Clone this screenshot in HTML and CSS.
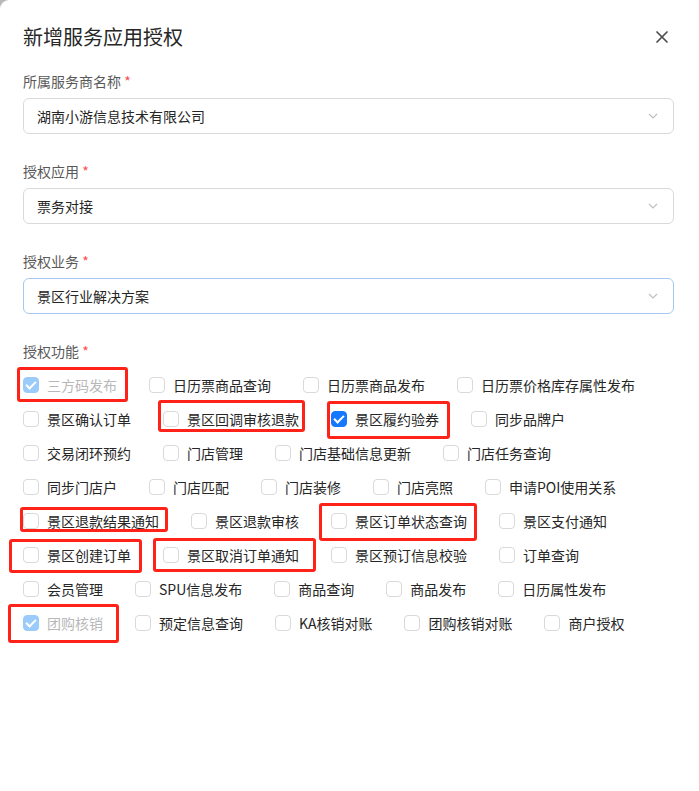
FILE: index.html
```html
<!DOCTYPE html>
<html lang="zh-CN">
<head>
    <meta charset="UTF-8">
    <meta name="viewport" content="width=device-width, initial-scale=1.0">
    <title>新增服务应用授权</title>
    <link rel="stylesheet" href="styles.css">
</head>
<body>
    <div class="modal">
        <div class="modal-head">
            <div class="modal-title">新增服务应用授权</div>
            <span class="close">
                <svg width="12" height="12" viewBox="0 0 12 12"><path d="M1 1 L11 11 M11 1 L1 11" stroke="#4d4d4d" stroke-width="1.7" stroke-linecap="round"/></svg>
            </span>
        </div>

        <div class="field">
            <div class="label">所属服务商名称 <span class="req">*</span></div>
            <div class="select">
                <span>湖南小游信息技术有限公司</span>
                <svg class="arrow" width="10" height="6" viewBox="0 0 10 6"><path d="M1 1 L5 5 L9 1" fill="none" stroke="#bfbfbf" stroke-width="1.2"/></svg>
            </div>
        </div>

        <div class="field">
            <div class="label">授权应用 <span class="req">*</span></div>
            <div class="select">
                <span>票务对接</span>
                <svg class="arrow" width="10" height="6" viewBox="0 0 10 6"><path d="M1 1 L5 5 L9 1" fill="none" stroke="#bfbfbf" stroke-width="1.2"/></svg>
            </div>
        </div>

        <div class="field">
            <div class="label">授权业务 <span class="req">*</span></div>
            <div class="select focus">
                <span>景区行业解决方案</span>
                <svg class="arrow" width="10" height="6" viewBox="0 0 10 6"><path d="M1 1 L5 5 L9 1" fill="none" stroke="#bfbfbf" stroke-width="1.2"/></svg>
            </div>
        </div>

        <div class="label">授权功能 <span class="req">*</span></div>
        <div class="group">
            <div class="row">
                <label class="cb disabled checked"><i></i>三方码发布</label>
                <label class="cb"><i></i>日历票商品查询</label>
                <label class="cb"><i></i>日历票商品发布</label>
                <label class="cb"><i></i>日历票价格库存属性发布</label>
            </div>
            <div class="row">
                <label class="cb"><i></i>景区确认订单</label>
                <label class="cb"><i></i>景区回调审核退款</label>
                <label class="cb checked"><i></i>景区履约验券</label>
                <label class="cb"><i></i>同步品牌户</label>
            </div>
            <div class="row">
                <label class="cb"><i></i>交易闭环预约</label>
                <label class="cb"><i></i>门店管理</label>
                <label class="cb"><i></i>门店基础信息更新</label>
                <label class="cb"><i></i>门店任务查询</label>
            </div>
            <div class="row">
                <label class="cb"><i></i>同步门店户</label>
                <label class="cb"><i></i>门店匹配</label>
                <label class="cb"><i></i>门店装修</label>
                <label class="cb"><i></i>门店亮照</label>
                <label class="cb"><i></i>申请POI使用关系</label>
            </div>
            <div class="row">
                <label class="cb"><i></i>景区退款结果通知</label>
                <label class="cb"><i></i>景区退款审核</label>
                <label class="cb"><i></i>景区订单状态查询</label>
                <label class="cb"><i></i>景区支付通知</label>
            </div>
            <div class="row">
                <label class="cb"><i></i>景区创建订单</label>
                <label class="cb"><i></i>景区取消订单通知</label>
                <label class="cb"><i></i>景区预订信息校验</label>
                <label class="cb"><i></i>订单查询</label>
            </div>
            <div class="row">
                <label class="cb"><i></i>会员管理</label>
                <label class="cb"><i></i>SPU信息发布</label>
                <label class="cb"><i></i>商品查询</label>
                <label class="cb"><i></i>商品发布</label>
                <label class="cb"><i></i>日历属性发布</label>
            </div>
            <div class="row">
                <label class="cb disabled checked"><i></i>团购核销</label>
                <label class="cb"><i></i>预定信息查询</label>
                <label class="cb"><i></i>KA核销对账</label>
                <label class="cb"><i></i>团购核销对账</label>
                <label class="cb"><i></i>商户授权</label>
            </div>
        </div>

        <!-- annotation boxes drawn over the screenshot -->
        <div class="mark m1"></div>
        <div class="mark m2"></div>
        <div class="mark m3"></div>
        <div class="mark m4"></div>
        <div class="mark m5"></div>
        <div class="mark m6"></div>
        <div class="mark m7"></div>
        <div class="mark m8"></div>
    </div>
</body>
</html>
```

FILE: styles.css
```css
html, body {
    margin: 0;
    padding: 0;
    background: #b9b9b9;
}
body {
    font-family: "Noto Sans CJK SC", "Noto Sans", sans-serif;
    font-size: 14px;
    color: #262626;
}
.modal {
    position: relative;
    box-sizing: border-box;
    width: 699px;
    height: 791px;
    background: #fff;
    border-top-left-radius: 9px;
    padding: 23px 25px 0 23px;
    overflow: hidden;
}
.modal-head {
    display: flex;
    justify-content: space-between;
    align-items: center;
    height: 28px;
    margin-bottom: 19px;
}
.modal-title {
    font-size: 20px;
    line-height: 28px;
    color: #262626;
}
.close {
    display: flex;
    width: 12px;
    height: 12px;
    margin-right: 6px;
}
.field {
    margin-bottom: 26px;
}
.label {
    line-height: 22px;
    color: #595959;
    margin-bottom: 6px;
}
.req {
    color: #ff4d4f;
}
.select {
    box-sizing: border-box;
    height: 36px;
    border: 1px solid #d9d9d9;
    border-radius: 6px;
    padding: 0 15px 0 13px;
    display: flex;
    align-items: center;
    justify-content: space-between;
    line-height: 22px;
    color: #262626;
}
.select.focus {
    border-color: #a6c8f2;
}
.group {
    margin-top: 0;
}
.row {
    display: flex;
    align-items: center;
    height: 34px;
}
.cb {
    display: flex;
    align-items: center;
    line-height: 22px;
    margin-right: 32px;
    white-space: nowrap;
    color: #262626;
}
.cb i {
    box-sizing: border-box;
    width: 16px;
    height: 16px;
    border: 1px solid #d9d9d9;
    border-radius: 4px;
    margin-right: 8px;
    background: #fff;
    position: relative;
}
.cb.checked i {
    background: #1677ff;
    border-color: #1677ff;
}
.cb.checked i::after {
    content: "";
    position: absolute;
    left: 4px;
    top: 1px;
    width: 4px;
    height: 8px;
    border: solid #fff;
    border-width: 0 2px 2px 0;
    transform: rotate(45deg);
}
.cb.disabled {
    color: #b8b8b8;
}
.cb.disabled i {
    background: #9bcbfa;
    border-color: #9bcbfa;
}
.mark {
    position: absolute;
    box-sizing: border-box;
    border: 3px solid #ff2218;
    border-radius: 3px;
}
.m1 { left: 17px; top: 367px; width: 111px; height: 35px; }
.m2 { left: 158px; top: 400px; width: 147px; height: 32px; }
.m3 { left: 327px; top: 401px; width: 123px; height: 38px; }
.m4 { left: 20px; top: 507px; width: 148px; height: 25px; }
.m5 { left: 319px; top: 503px; width: 158px; height: 38px; }
.m6 { left: 9px; top: 539px; width: 133px; height: 34px; }
.m7 { left: 153px; top: 538px; width: 163px; height: 34px; }
.m8 { left: 8px; top: 604px; width: 111px; height: 39px; }
```
